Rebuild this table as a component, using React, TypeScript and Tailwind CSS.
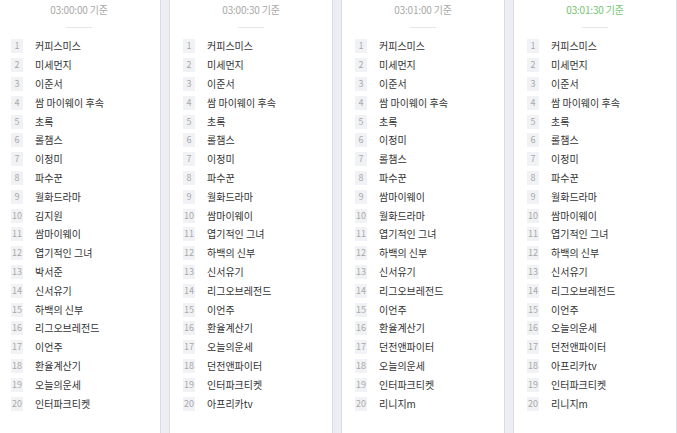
import React from "react";

const columns: { time: string; active?: boolean; items: string[] }[] = [
  {
    time: "03:00:00 기준",
    items: [
      "커피스미스", "미세먼지", "이준서", "쌈 마이웨이 후속", "초록", "롤챔스", "이정미", "파수꾼", "월화드라마", "김지원",
      "쌈마이웨이", "엽기적인 그녀", "박서준", "신서유기", "하백의 신부", "리그오브레전드", "이언주", "환율계산기", "오늘의운세", "인터파크티켓",
    ],
  },
  {
    time: "03:00:30 기준",
    items: [
      "커피스미스", "미세먼지", "이준서", "쌈 마이웨이 후속", "초록", "롤챔스", "이정미", "파수꾼", "월화드라마", "쌈마이웨이",
      "엽기적인 그녀", "하백의 신부", "신서유기", "리그오브레전드", "이언주", "환율계산기", "오늘의운세", "던전앤파이터", "인터파크티켓", "아프리카tv",
    ],
  },
  {
    time: "03:01:00 기준",
    items: [
      "커피스미스", "미세먼지", "이준서", "쌈 마이웨이 후속", "초록", "이정미", "롤챔스", "파수꾼", "쌈마이웨이", "월화드라마",
      "엽기적인 그녀", "하백의 신부", "신서유기", "리그오브레전드", "이언주", "환율계산기", "던전앤파이터", "오늘의운세", "인터파크티켓", "리니지m",
    ],
  },
  {
    time: "03:01:30 기준",
    active: true,
    items: [
      "커피스미스", "미세먼지", "이준서", "쌈 마이웨이 후속", "초록", "롤챔스", "이정미", "파수꾼", "월화드라마", "쌈마이웨이",
      "엽기적인 그녀", "하백의 신부", "신서유기", "리그오브레전드", "이언주", "오늘의운세", "던전앤파이터", "아프리카tv", "인터파크티켓", "리니지m",
    ],
  },
];

export default function App() {
  return (
    <div
      className="w-[677px] h-[433px] overflow-hidden bg-[#eceef3]"
      style={{ fontFamily: '"Noto Sans CJK KR", "Noto Sans", sans-serif' }}
    >
      <div className="flex gap-[8px] ml-[-3px] h-full">
        {columns.map((col, ci) => (
          <div
            key={ci}
            className="w-[164px] shrink-0 h-full bg-white border-x border-[#d9dce4] flex flex-col"
          >
            <div
              className={
                "h-[20px] leading-[20px] text-center text-[10px] tracking-[-0.2px] " +
                (col.active ? "text-[#72c46f]" : "text-[#a8a8a8]")
              }
            >
              {col.time}
            </div>
            <div className="mx-auto mt-[7px] w-[26px] h-px bg-[#e6e6e6]" />
            <ul className="mt-[9px]">
              {col.items.map((item, i) => (
                <li key={i} className="h-[18.8px] flex items-center">
                  <div className="w-[37px] shrink-0 pl-[13px] flex">
                    <span className="min-w-[12px] h-[14px] px-[1px] bg-[#f1f2f5] text-[#a9a9a9] text-[9px] leading-[14px] text-center">
                      {i + 1}
                    </span>
                  </div>
                  <span className="text-[10px] text-[#333] leading-none whitespace-nowrap">
                    {item}
                  </span>
                </li>
              ))}
            </ul>
          </div>
        ))}
      </div>
    </div>
  );
}
